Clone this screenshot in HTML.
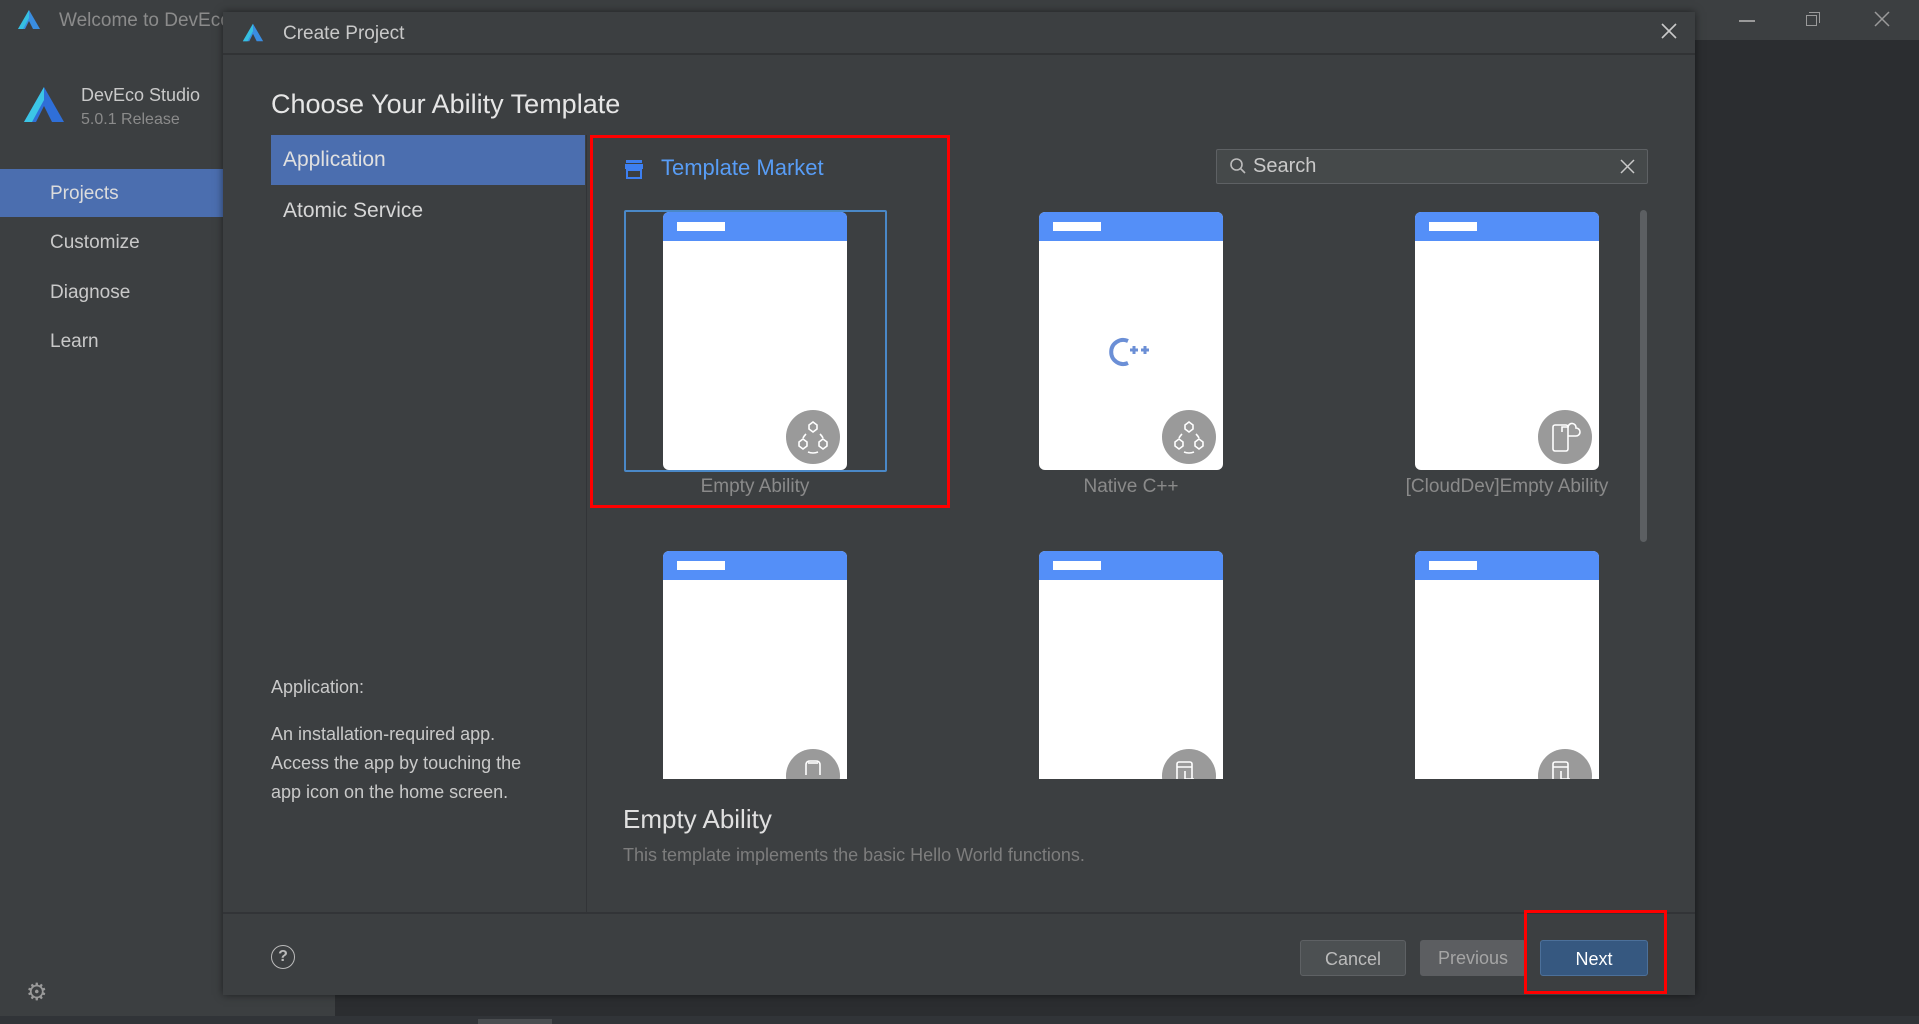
<!DOCTYPE html>
<html><head><meta charset="utf-8"><style>
*{margin:0;padding:0;box-sizing:border-box}
body{width:1919px;height:1024px;overflow:hidden;background:#2b2d30;font-family:"Liberation Sans",sans-serif;position:relative}
.a{position:absolute}
.t{position:absolute;white-space:nowrap}
.phone{position:absolute;width:184px;background:#fff;border-radius:6px;overflow:hidden}
.phone .hd{height:29px;background:#548ff8}
.phone .hd i{position:absolute;left:14px;top:10px;width:48px;height:9px;background:#fff}
.badge{position:absolute;width:54px;height:54px;border-radius:50%;background:#9a9a9a}
.lbl{position:absolute;color:#8a8a8a;font-size:19px;width:260px;text-align:center}
.btn{position:absolute;height:36px;top:940px;border-radius:3px;font-size:18px;text-align:center;line-height:36px}
</style></head><body>
<div class="a" style="left:0;top:0;width:1919px;height:40px;background:#3c3f41"></div>
<div class="a" style="left:0;top:40px;width:223px;height:984px;background:#3c3f41"></div>
<div class="a" style="left:223px;top:995px;width:112px;height:29px;background:#3c3f41"></div>
<div class="a" style="left:0;top:1016px;width:1919px;height:8px;background:#313438"></div>
<div class="a" style="left:478px;top:1019px;width:74px;height:5px;background:#4a4d50"></div>
<svg class="a" style="left:16px;top:9px" width="26" height="22" viewBox="0 0 26 22"><path d="M13 1 L24 20 H17 L13 12 L9 20 H2Z" fill="#3a8de0"/><path d="M13 1 L2 20 H7 L13 9Z" fill="#36c0e0"/></svg>
<div class="t" style="left:59px;top:10px;color:#8b8b8b;font-size:19px">Welcome to DevEco</div>
<div class="a" style="left:1739px;top:20px;width:16px;height:1.5px;background:#9a9a9a"></div>
<div class="a" style="left:1806px;top:15px;width:11px;height:11px;border:1.5px solid #9a9a9a"></div>
<div class="a" style="left:1809px;top:12px;width:11px;height:11px;border-top:1.5px solid #9a9a9a;border-right:1.5px solid #9a9a9a"></div>
<svg class="a" style="left:1874px;top:11px" width="16" height="16"><path d="M1 1L15 15M15 1L1 15" stroke="#9a9a9a" stroke-width="1.5"/></svg>
<svg class="a" style="left:22px;top:86px" width="44" height="38" viewBox="0 0 44 38"><path d="M22 1 L42 36 H30 L22 20 L14 36 H2Z" fill="#2f6fd8"/><path d="M22 1 L2 36 H10 L22 14Z" fill="#3cc6e6"/></svg>
<div class="t" style="left:81px;top:85px;color:#c9c9c9;font-size:18px">DevEco Studio</div>
<div class="t" style="left:81px;top:111px;color:#8b8b8b;font-size:16px">5.0.1 Release</div>
<div class="a" style="left:0;top:169px;width:223px;height:48px;background:#4b6eaf"></div>
<div class="t" style="left:50px;top:183px;color:#dcdcdc;font-size:19px">Projects</div>
<div class="t" style="left:50px;top:232px;color:#c9c9c9;font-size:19px">Customize</div>
<div class="t" style="left:50px;top:282px;color:#c9c9c9;font-size:19px">Diagnose</div>
<div class="t" style="left:50px;top:331px;color:#c9c9c9;font-size:19px">Learn</div>
<div class="t" style="left:26px;top:978px;color:#9a9a9a;font-size:24px">&#9881;</div>
<div class="a" style="left:223px;top:12px;width:1472px;height:983px;background:#3c3f41;box-shadow:0 0 8px rgba(0,0,0,.5)"></div>
<div class="a" style="left:223px;top:53px;width:1472px;height:2px;background:#313335"></div>
<svg class="a" style="left:241px;top:22px" width="24" height="22" viewBox="0 0 26 22"><path d="M13 1 L24 20 H17 L13 12 L9 20 H2Z" fill="#3a8de0"/><path d="M13 1 L2 20 H7 L13 9Z" fill="#36c0e0"/></svg>
<div class="t" style="left:283px;top:23px;color:#c9c9c9;font-size:19px">Create Project</div>
<svg class="a" style="left:1660px;top:22px" width="18" height="18"><path d="M2 2L16 16M16 2L2 16" stroke="#c9c9c9" stroke-width="1.6"/></svg>
<div class="t" style="left:271px;top:89px;color:#e6e6e6;font-size:27px">Choose Your Ability Template</div>
<div class="a" style="left:271px;top:135px;width:314px;height:50px;background:#4b6eaf"></div>
<div class="t" style="left:283px;top:148px;color:#e0e0e0;font-size:21px">Application</div>
<div class="t" style="left:283px;top:199px;color:#d6d6d6;font-size:21px">Atomic Service</div>
<div class="t" style="left:271px;top:677px;color:#c9c9c9;font-size:18px">Application:</div>
<div class="t" style="left:271px;top:720px;color:#c9c9c9;font-size:18px;line-height:29px">An installation-required app.<br>Access the app by touching the<br>app icon on the home screen.</div>
<div class="a" style="left:586px;top:135px;width:1px;height:778px;background:#323437"></div>
<div class="a" style="left:223px;top:912px;width:1472px;height:2px;background:#323437"></div>
<svg class="a" style="left:625px;top:159px" width="18" height="20" viewBox="0 0 18 20"><rect x="1" y="1" width="16" height="3" fill="#3d7ff0"/><rect x="0" y="5" width="18" height="5" fill="#3d7ff0"/><rect x="2" y="11" width="14" height="8" fill="none" stroke="#3d7ff0" stroke-width="2"/></svg>
<div class="t" style="left:661px;top:155px;color:#589df6;font-size:22px">Template Market</div>
<div class="a" style="left:1216px;top:149px;width:432px;height:35px;border:1px solid #5e6164;background:#45494a;border-radius:2px"></div>
<svg class="a" style="left:1229px;top:157px" width="18" height="20"><circle cx="7.5" cy="7.5" r="5.5" fill="none" stroke="#bbb" stroke-width="1.6"/><path d="M11.5 11.5L16 16" stroke="#bbb" stroke-width="1.6"/></svg>
<div class="t" style="left:1253px;top:155px;color:#c9c9c9;font-size:20px">Search</div>
<svg class="a" style="left:1619px;top:158px" width="17" height="17"><path d="M2 2L15 15M15 2L2 15" stroke="#c9c9c9" stroke-width="1.5"/></svg>
<div class="a" style="left:624px;top:210px;width:263px;height:262px;border:2px solid #4a88c7;border-radius:2px"></div>
<div class="phone" style="left:663px;top:212px;height:258px"><div class="hd"><i></i></div></div>
<div class="phone" style="left:1039px;top:212px;height:258px"><div class="hd"><i></i></div></div>
<div class="phone" style="left:1415px;top:212px;height:258px"><div class="hd"><i></i></div></div>
<div class="phone" style="left:663px;top:551px;height:228px;border-radius:6px 6px 0 0"><div class="hd"><i></i></div></div>
<div class="phone" style="left:1039px;top:551px;height:228px;border-radius:6px 6px 0 0"><div class="hd"><i></i></div></div>
<div class="phone" style="left:1415px;top:551px;height:228px;border-radius:6px 6px 0 0"><div class="hd"><i></i></div></div>
<div class="badge" style="left:786px;top:410px"></div>
<div class="badge" style="left:1162px;top:410px"></div>
<div class="badge" style="left:1538px;top:410px"></div>
<div class="a" style="left:786px;top:749px;width:54px;height:30px;overflow:hidden"><div class="badge" style="left:0;top:0"></div><svg class="a" style="left:0;top:0" width="54" height="54"><path d="M20 26 V16 Q20 12 24 12 H30 Q34 12 34 16 V26" fill="none" stroke="#fff" stroke-width="1.6"/><path d="M22 14 H32" stroke="#fff" stroke-width="1.6"/></svg></div>
<div class="a" style="left:1162px;top:749px;width:54px;height:30px;overflow:hidden"><div class="badge" style="left:0;top:0"></div><svg class="a" style="left:0;top:0" width="54" height="54"><g fill="none" stroke="#fff" stroke-width="1.6"><rect x="15" y="13" width="15" height="26" rx="2"/><path d="M15 18 H30M23 22 V30 H32"/></g></svg></div>
<div class="a" style="left:1538px;top:749px;width:54px;height:30px;overflow:hidden"><div class="badge" style="left:0;top:0"></div><svg class="a" style="left:0;top:0" width="54" height="54"><g fill="none" stroke="#fff" stroke-width="1.6"><rect x="15" y="13" width="15" height="26" rx="2"/><path d="M15 18 H30M23 22 V30 H32"/></g></svg></div>
<svg class="a" style="left:786px;top:410px" width="54" height="54"><g fill="none" stroke="#fff" stroke-width="1.6"><polygon points="27,12 31,15 31,19 27,22 23,19 23,15"/><polygon points="17,29 21,32 21,36 17,39 13,36 13,32"/><polygon points="37,29 41,32 41,36 37,39 33,36 33,32"/><path d="M20 24 Q18 26 17 28M34 24 Q36 26 37 28M22 42 Q27 44 32 42"/></g></svg>
<svg class="a" style="left:1162px;top:410px" width="54" height="54"><g fill="none" stroke="#fff" stroke-width="1.6"><polygon points="27,12 31,15 31,19 27,22 23,19 23,15"/><polygon points="17,29 21,32 21,36 17,39 13,36 13,32"/><polygon points="37,29 41,32 41,36 37,39 33,36 33,32"/><path d="M20 24 Q18 26 17 28M34 24 Q36 26 37 28M22 42 Q27 44 32 42"/></g></svg>
<svg class="a" style="left:1538px;top:410px" width="54" height="54"><g fill="none" stroke="#fff" stroke-width="1.6"><rect x="15" y="15" width="15" height="26" rx="2"/><path d="M24 22 V17 H30 A4 4 0 0 1 38 18 A4 4 0 0 1 38 26 H30"/></g></svg>
<svg class="a" style="left:1104px;top:332px" width="56" height="40"><path d="M24 9 A12 12 0 1 0 24 31" fill="none" stroke="#6b8fd6" stroke-width="4"/><path d="M26 18h8M30 14v8M37 18h8M41 14v8" stroke="#6b8fd6" stroke-width="3"/></svg>
<div class="lbl" style="left:625px;top:476px">Empty Ability</div>
<div class="lbl" style="left:1001px;top:476px">Native C++</div>
<div class="lbl" style="left:1372px;top:476px;width:270px">[CloudDev]Empty Ability</div>
<div class="a" style="left:1640px;top:210px;width:7px;height:332px;background:#5c5f62;border-radius:4px"></div>
<div class="t" style="left:623px;top:804px;color:#e0e0e0;font-size:26px">Empty Ability</div>
<div class="t" style="left:623px;top:845px;color:#7d7d7d;font-size:18px">This template implements the basic Hello World functions.</div>
<div class="a" style="left:271px;top:945px;width:24px;height:24px;border:1.6px solid #bbb;border-radius:50%;color:#bbb;font-size:16px;text-align:center;line-height:21px;font-weight:bold">?</div>
<div class="btn" style="left:1300px;width:106px;background:#4c5052;border:1px solid #5e6164;color:#bbbbbb">Cancel</div>
<div class="btn" style="left:1420px;width:106px;background:#5c5e61;color:#a5a5a5">Previous</div>
<div class="btn" style="left:1540px;width:108px;background:#365880;border:1px solid #4c709a;color:#fff">Next</div>
<div class="a" style="left:590px;top:135px;width:360px;height:373px;border:3px solid #f00"></div>
<div class="a" style="left:1524px;top:910px;width:143px;height:84px;border:3px solid #f00"></div>
</body></html>
